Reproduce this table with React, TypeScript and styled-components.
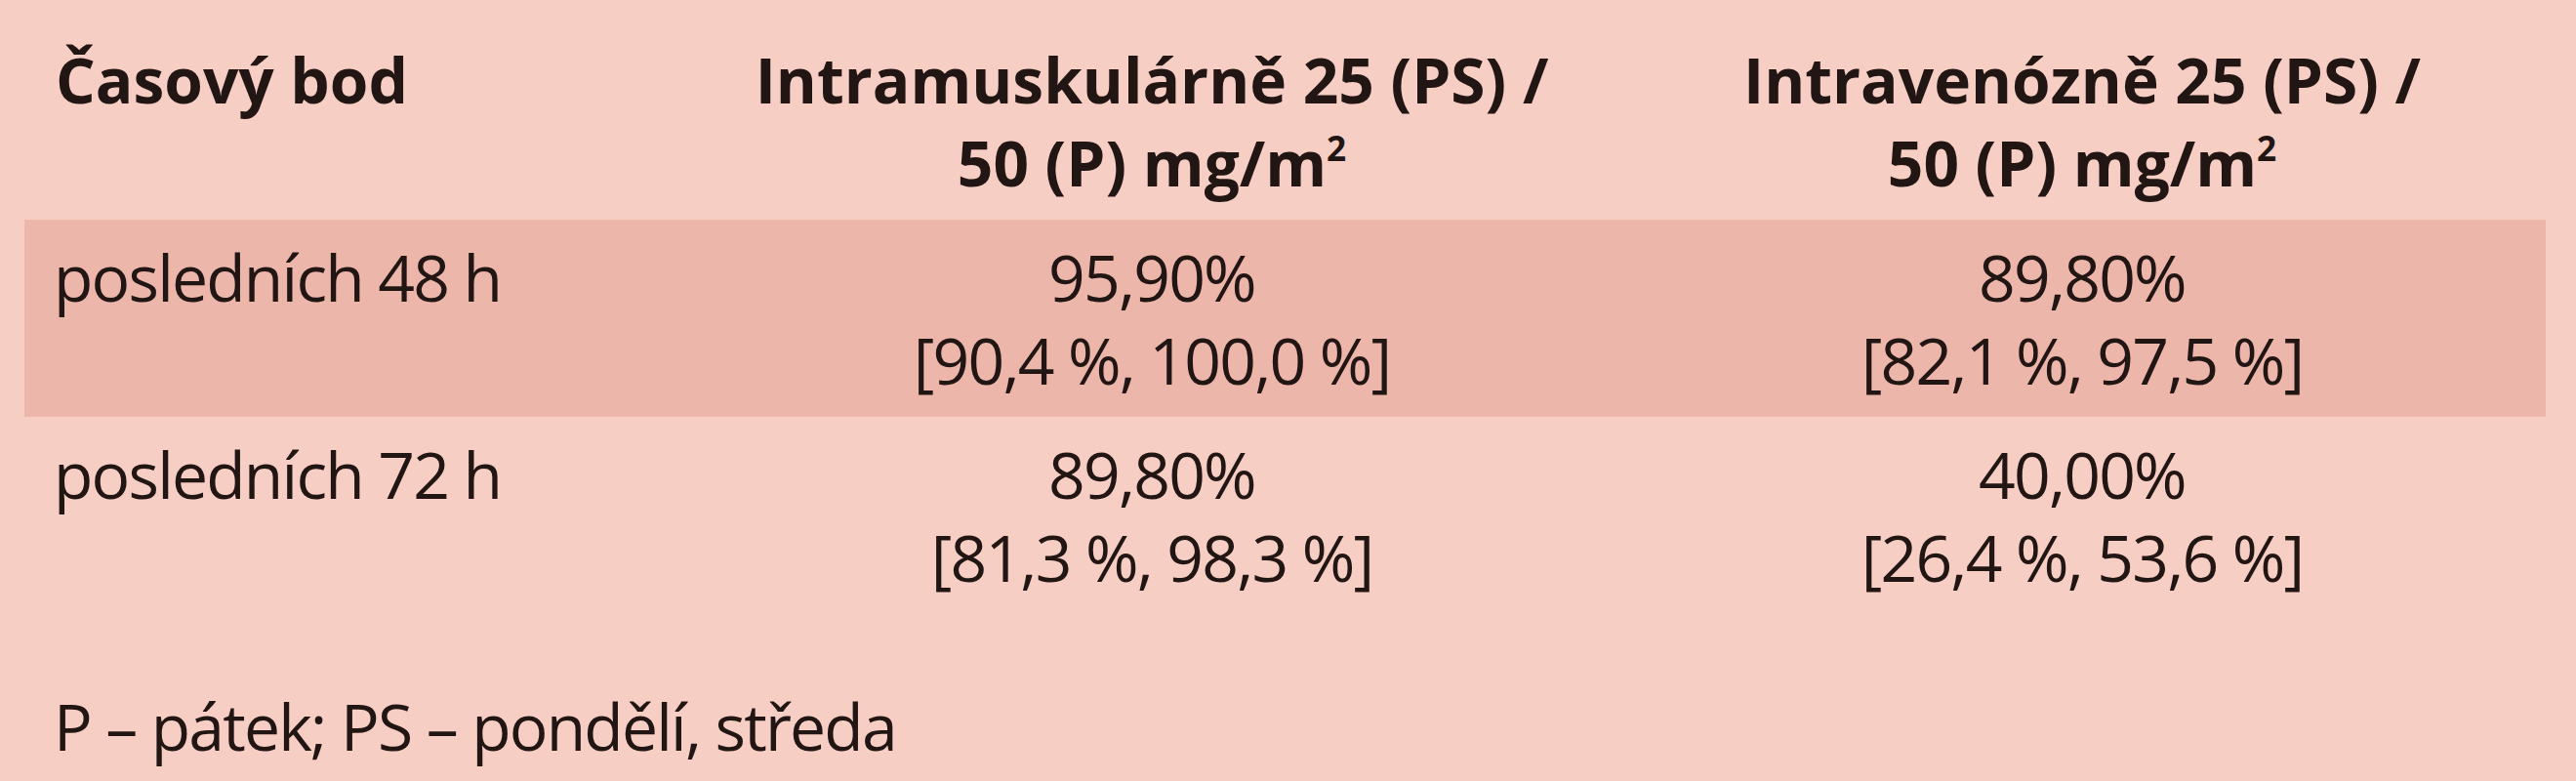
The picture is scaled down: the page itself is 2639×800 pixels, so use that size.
import styled, { createGlobalStyle } from 'styled-components';

const GlobalStyle = createGlobalStyle`
  html,
  body {
    margin: 0;
    padding: 0;
    background: #f7cec4;
  }

  body {
    font-family: "Open Sans", "Noto Sans", "DejaVu Sans", sans-serif;
    color: #221614;
  }
`;

interface DataRow {
  label: string;
  im: [string, string];
  iv: [string, string];
}

const rows: DataRow[] = [
  {
    label: 'posledních 48 h',
    im: ['95,90%', '[90,4 %, 100,0 %]'],
    iv: ['89,80%', '[82,1 %, 97,5 %]'],
  },
  {
    label: 'posledních 72 h',
    im: ['89,80%', '[81,3 %, 98,3 %]'],
    iv: ['40,00%', '[26,4 %, 53,6 %]'],
  },
];

function App() {
  return (
    <>
      <GlobalStyle />
      <Page>
        <Table>
          <HeadRow>
            <HeadCell $align="left">Časový bod</HeadCell>
            <HeadCell $align="center">
              Intramuskulárně 25 (PS) /
              <br />
              50 (P) mg/m<Sup>2</Sup>
            </HeadCell>
            <HeadCell $align="center">
              Intravenózně 25 (PS) /
              <br />
              50 (P) mg/m<Sup>2</Sup>
            </HeadCell>
          </HeadRow>
          {rows.map((row, i) => (
            <BodyRow key={row.label} $shaded={i % 2 === 0}>
              <Cell $align="left">{row.label}</Cell>
              <Cell $align="center">
                {row.im[0]}
                <br />
                {row.im[1]}
              </Cell>
              <Cell $align="center">
                {row.iv[0]}
                <br />
                {row.iv[1]}
              </Cell>
            </BodyRow>
          ))}
        </Table>
        <Footnote>P – pátek; PS – pondělí, středa</Footnote>
      </Page>
    </>
  );
}

const Page = styled.div`
  box-sizing: border-box;
  width: 2639px;
  height: 800px;
  padding: 39px 31px 0 25px;
  background: #f7cec4;
  overflow: hidden;
`;

const Table = styled.div`
  display: flex;
  flex-direction: column;
`;

const Row = styled.div`
  display: grid;
  grid-template-columns: 677px 956px 950px;
  line-height: 85px;
`;

const HeadRow = styled(Row)`
  padding-bottom: 16px;
`;

const BodyRow = styled(Row)<{ $shaded?: boolean }>`
  padding: 16px 0;
  background: ${(p) => (p.$shaded ? '#edb6aa' : 'transparent')};
`;

const HeadCell = styled.div<{ $align: 'left' | 'center' }>`
  font-size: 64px;
  font-weight: 700;
  letter-spacing: 0;
  text-align: ${(p) => p.$align};
  padding-left: ${(p) => (p.$align === 'left' ? '32px' : '0')};
  white-space: nowrap;
`;

const Cell = styled.div<{ $align: 'left' | 'center' }>`
  font-size: 66px;
  font-weight: 400;
  letter-spacing: -1.8px;
  text-align: ${(p) => p.$align};
  padding-left: ${(p) => (p.$align === 'left' ? '30px' : '0')};
  white-space: nowrap;
`;

const Sup = styled.sup`
  font-size: 0.55em;
  line-height: 0;
  vertical-align: 0.75em;
`;

const Footnote = styled.div`
  margin-top: 72px;
  padding-left: 30px;
  font-size: 66px;
  line-height: 85px;
  letter-spacing: -1.8px;
  white-space: nowrap;
`;

export default App;
